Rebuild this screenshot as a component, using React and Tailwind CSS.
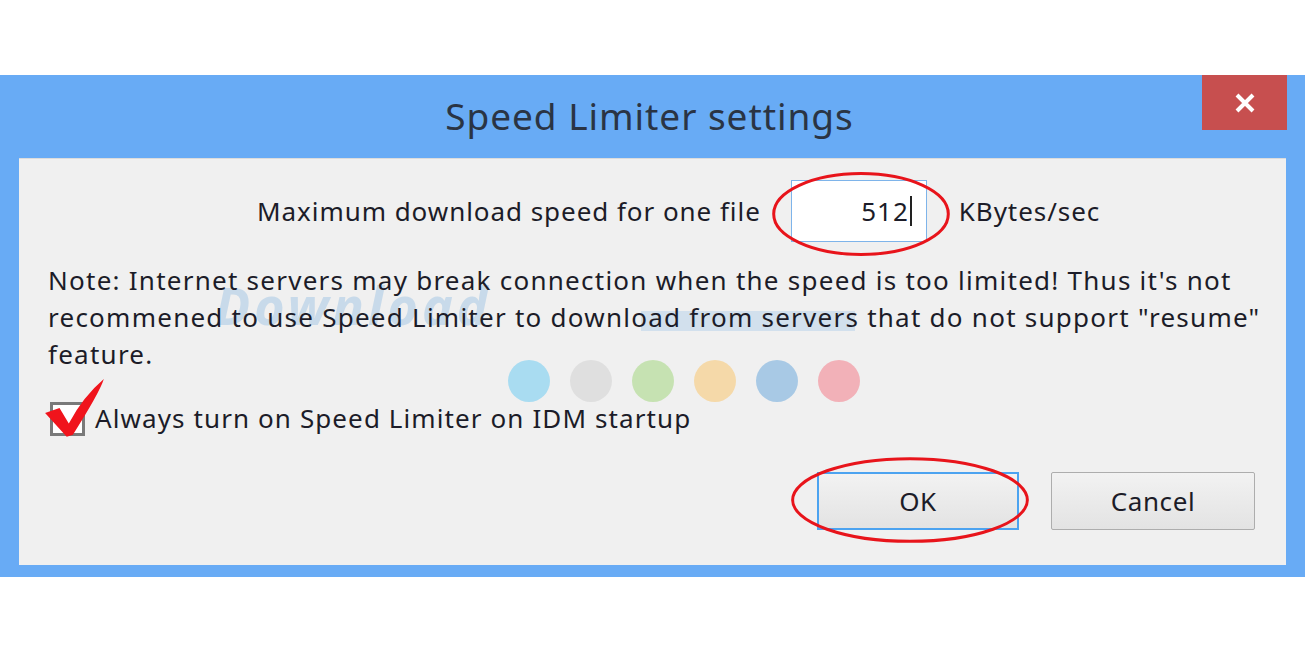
import React from 'react';

const font = { fontFamily: '"Noto Sans", "Open Sans", sans-serif' };

const dots = ['#a9dcf1', '#dfdfdf', '#c6e2b2', '#f5d9a9', '#a8c9e5', '#f2b1b8'];

const Ellipse = ({ className }) => (
  <svg className={`absolute pointer-events-none ${className}`} viewBox="0 0 100 50" preserveAspectRatio="none">
    <ellipse cx="50" cy="25" rx="48.5" ry="23.5" fill="none" stroke="#e8141b" strokeWidth="3" vectorEffect="non-scaling-stroke" />
  </svg>
);

const App = () => {
  return (
    <div className="w-full h-[656px] bg-white pt-[75px]" style={font}>
      <div className="bg-[#68abf5] h-[502px] flex flex-col">
        {/* title bar */}
        <div className="relative h-[83px] flex items-center justify-center">
          <span className="text-[37px] text-[#2a3444] pb-[2px] pr-[6px] tracking-[0.95px]">Speed Limiter settings</span>
          <div className="absolute right-[18px] top-0 w-[85px] h-[55px] bg-[#c74f4f] flex items-center justify-center">
            <svg width="22" height="22" viewBox="0 0 22 22">
              <path d="M3 3 L19 19 M19 3 L3 19" stroke="#fff" strokeWidth="4" />
            </svg>
          </div>
        </div>

        {/* client area */}
        <div className="relative mx-[19px] flex-1 mb-[12px] bg-[#f0f0f0] border-t border-[#dcdcdc] text-[#1c1c28] text-[26px]">
          {/* watermark */}
          <div className="absolute left-[196px] top-[120px] text-[52px] font-bold italic text-[#8dbbe2] opacity-40 leading-none tracking-[4px] pointer-events-none select-none">
            Download
          </div>
          <div className="absolute left-[622px] top-[152px] w-[214px] h-[20px] bg-[#a6c9e8] opacity-40 pointer-events-none" />
          <div className="absolute left-[489px] top-[201px] flex gap-[20px] pointer-events-none">
            {dots.map((c, i) => (
              <div key={i} className="w-[42px] h-[42px] rounded-full" style={{ backgroundColor: c }} />
            ))}
          </div>

          {/* speed row */}
          <div className="relative flex items-center pl-[238px] pt-[21px] tracking-[0.95px]">
            <span>Maximum download speed for one file</span>
            <div className="relative ml-[30px]">
              <div className="w-[136px] h-[62px] bg-white border border-[#7eb4ea] flex items-center justify-end pr-[14px]">
                <span>512</span>
                <span className="w-[2px] h-[30px] bg-[#222] ml-[1px]" />
              </div>
              <Ellipse className="left-[-20px] top-[-9px] w-[180px] h-[86px]" />
            </div>
            <span className="ml-[32px]">KBytes/sec</span>
          </div>

          {/* note */}
          <p className="relative pl-[29px] pr-[14px] mt-[20px] leading-[37px] tracking-[1.25px]">
            Note: Internet servers may break connection when the speed is too limited! Thus it's not recommened to use Speed Limiter to download from servers that do not support "resume" feature.
          </p>

          {/* checkbox */}
          <div className="relative flex items-center pl-[31px] mt-[26px] tracking-[1.1px]">
            <div className="relative w-[35px] h-[34px] border-[3px] border-[#7a7a7a] bg-white">
              <svg className="absolute left-[-11px] top-[-29px]" width="68" height="66" viewBox="0 0 66 64">
                <path d="M3 36 L17 31 L26 46 Q40 20 60 3 Q56 16 30 57 L24 59 Z" fill="#f0141c" />
              </svg>
            </div>
            <span className="ml-[10px]">Always turn on Speed Limiter on IDM startup</span>
          </div>

          {/* buttons */}
          <div className="relative flex justify-end gap-[32px] pr-[31px] mt-[34px] tracking-[0.6px]">
            <div className="relative">
              <div className="w-[202px] h-[58px] border-2 border-[#4ca3f0] bg-gradient-to-b from-[#f2f2f2] to-[#e3e3e3] flex items-center justify-center">
                OK
              </div>
              <Ellipse className="left-[-28px] top-[-16px] w-[242px] h-[88px]" />
            </div>
            <div className="w-[204px] h-[58px] border border-[#adadad] rounded-[2px] bg-gradient-to-b from-[#f2f2f2] to-[#e3e3e3] flex items-center justify-center">
              Cancel
            </div>
          </div>
        </div>
      </div>
    </div>
  );
};

export default App;
